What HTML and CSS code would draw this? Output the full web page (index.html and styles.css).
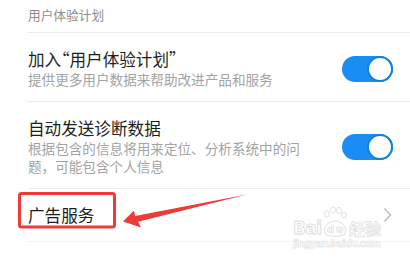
FILE: index.html
```html
<!DOCTYPE html>
<html lang="zh">
<head>
<meta charset="utf-8">
<link rel="stylesheet" href="styles.css">
</head>
<body>
<div class="page">
  <div class="list">
    <div class="section-title">用户体验计划</div>
    <div class="row">
      <div class="text">
        <div class="title">加入<span class="q">“</span>用户体验计划<span class="q">”</span></div>
        <div class="sub">提供更多用户数据来帮助改进产品和服务</div>
      </div>
      <div class="toggle"><div class="knob"></div></div>
    </div>
    <div class="row">
      <div class="text">
        <div class="title">自动发送诊断数据</div>
        <div class="sub wrap">根据包含的信息将用来定位、分析系统中的问题，可能包含个人信息</div>
      </div>
      <div class="toggle"><div class="knob"></div></div>
    </div>
    <div class="row row-link">
      <div class="title">广告服务</div>
      <svg class="chevron" width="9" height="16" viewBox="0 0 9 16"><path d="M1.5 1.5 L7.5 8 L1.5 14.5" fill="none" stroke="#b8b8b8" stroke-width="1.3"/></svg>
    </div>
  </div>

  <svg class="annot" width="410" height="262" viewBox="0 0 410 262">
    <rect x="19.5" y="193.5" width="95" height="33.5" rx="2" fill="none" stroke="#f03a3a" stroke-width="3"/>
    <polygon points="123,221.5 134,210.5 135,216 248,194.3 138,221.8 141,227.5" fill="#f03a3a"/>
  </svg>

  <div class="watermark">
    <svg width="100" height="50" viewBox="0 0 100 50">
      <g fill="none" stroke="#e0e0e0" stroke-width="1">
        <ellipse cx="38" cy="12" rx="2.4" ry="3.2"/>
        <ellipse cx="44" cy="8" rx="2.4" ry="3.2"/>
        <ellipse cx="50" cy="8.5" rx="2.4" ry="3.2"/>
        <ellipse cx="55" cy="13" rx="2.2" ry="3"/>
        <path d="M36 32 C33 25 40 19 46 19 C53 19 59 25 56 32 C53 35 39 35 36 32 Z"/>
      </g>
      <text x="4" y="32" class="wm-big" textLength="29">Bai</text>
      <text x="38" y="31" class="wm-du" textLength="16">du</text>
      <text x="60" y="33" class="wm-cn" textLength="32">经验</text>
      <text x="4" y="45" class="wm-url" textLength="88">jingyan.baidu.com</text>
    </svg>
  </div>
</div>
</body>
</html>
```

FILE: styles.css
```css
* { box-sizing: border-box; }
html, body {
  margin: 0;
  padding: 0;
  background: #ffffff;
}
body {
  font-family: "Noto Sans CJK SC", "Noto Sans", sans-serif;
  width: 410px;
  height: 262px;
  overflow: hidden;
  text-autospace: no-autospace;
}
.page {
  position: relative;
  width: 410px;
  height: 262px;
}
.list {
  padding-left: 27px;
}
.section-title {
  font-size: 12.7px;
  line-height: 20px;
  color: #8c8c8c;
  padding: 5px 0 7px 1px;
  border-bottom: 1px solid #ececec;
}
.row {
  display: flex;
  align-items: center;
  justify-content: space-between;
  padding: 16px 17px 13px 1px;
  border-bottom: 1px solid #ececec;
}
.title {
  font-size: 16.6px;
  line-height: 21px;
  color: #1e1e1e;
}
.q {
  font-feature-settings: "halt" 1;
}
.sub {
  font-size: 13.6px;
  line-height: 18px;
  color: #a3a3a3;
}
.sub.wrap {
  width: 274px;
}
.toggle {
  width: 51px;
  height: 26px;
  border-radius: 13px;
  background: #1a8df2;
  display: flex;
  justify-content: flex-end;
  align-items: center;
  flex-shrink: 0;
}
.knob {
  width: 26px;
  height: 26px;
  border-radius: 50%;
  background: #ffffff;
  border: 2px solid #1780dc;
}
.row-link {
  height: 53px;
  padding: 0 18px 0 1px;
  border-bottom: 1px solid #f4f4f4;
}
.chevron {
  display: block;
}
.annot {
  position: absolute;
  left: 0;
  top: 0;
  pointer-events: none;
}
.watermark {
  position: absolute;
  left: 289px;
  top: 202px;
  pointer-events: none;
}
.wm-big {
  font-family: "DejaVu Sans", sans-serif;
  font-size: 17px;
  font-weight: bold;
  fill: #ffffff;
  stroke: #dedede;
  stroke-width: 0.9;
}
.wm-du {
  font-family: "DejaVu Sans", sans-serif;
  font-size: 10px;
  font-weight: bold;
  fill: #ffffff;
  stroke: #dedede;
  stroke-width: 0.7;
}
.wm-cn {
  font-family: "Noto Sans CJK SC", sans-serif;
  font-size: 16px;
  font-weight: bold;
  fill: #ffffff;
  stroke: #dedede;
  stroke-width: 0.7;
}
.wm-url {
  font-family: "DejaVu Sans", sans-serif;
  font-size: 10px;
  font-weight: bold;
  fill: #ffffff;
  stroke: #e2e2e2;
  stroke-width: 0.6;
}
```
